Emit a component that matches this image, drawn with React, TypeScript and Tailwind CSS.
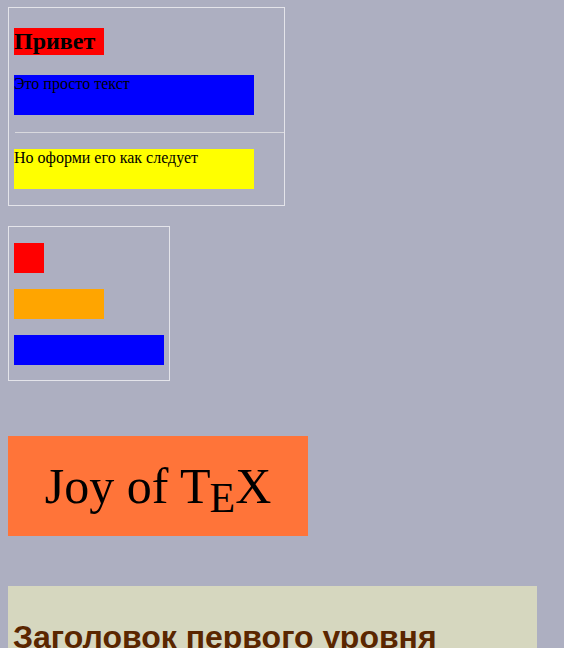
import React from "react";

export default function App() {
  const serif = { fontFamily: '"Liberation Serif", "DejaVu Serif", serif' };
  return (
    <div className="min-h-[648px] bg-[#adafc1] pl-[8px] pt-[7px] pb-10" style={serif}>
      <div className="w-[277px] border border-[#e4e4ea] pl-[5px] pt-[20px] pb-[16px]">
        <div className="w-[90px] h-[27px] bg-[#ff0000] text-[24px] leading-[27px] font-bold text-black">Привет</div>
        <div className="mt-[20px] w-[240px] h-[40px] bg-[#0000ff] text-[16px] leading-[18px] text-black">Это просто текст</div>
        <div className="mt-[17px] ml-[1px] h-px bg-[#d9d9de]" />
        <div className="mt-[16px] w-[240px] h-[40px] bg-[#ffff00] text-[16px] leading-[18px] text-black">Но оформи его как следует</div>
      </div>
      <div className="mt-[20px] w-[162px] border border-[#e4e4ea] px-[5px] pt-[16px] pb-[15px] flex flex-col gap-[16px]">
        <div className="w-[30px] h-[30px] bg-[#ff0000]" />
        <div className="w-[90px] h-[30px] bg-[#ffa500]" />
        <div className="w-[150px] h-[30px] bg-[#0000ff]" />
      </div>
      <div className="mt-[55px] w-[300px] h-[100px] bg-[#ff7439] flex items-center justify-center text-black text-[50px] leading-none">
        <span className="whitespace-pre">Joy of T</span>
        <span className="relative top-[12px] ml-[-1px] text-[42px]">E</span>
        <span>X</span>
      </div>
      <div className="mt-[50px] w-[529px] h-[100px] bg-[#d6d7bf] pl-[5px] pt-[31px]">
        <div className="text-[32px] font-bold text-[#5a2600] leading-tight" style={{ fontFamily: '"Liberation Sans", Arial, sans-serif' }}>
          Заголовок первого уровня
        </div>
      </div>
    </div>
  );
}
